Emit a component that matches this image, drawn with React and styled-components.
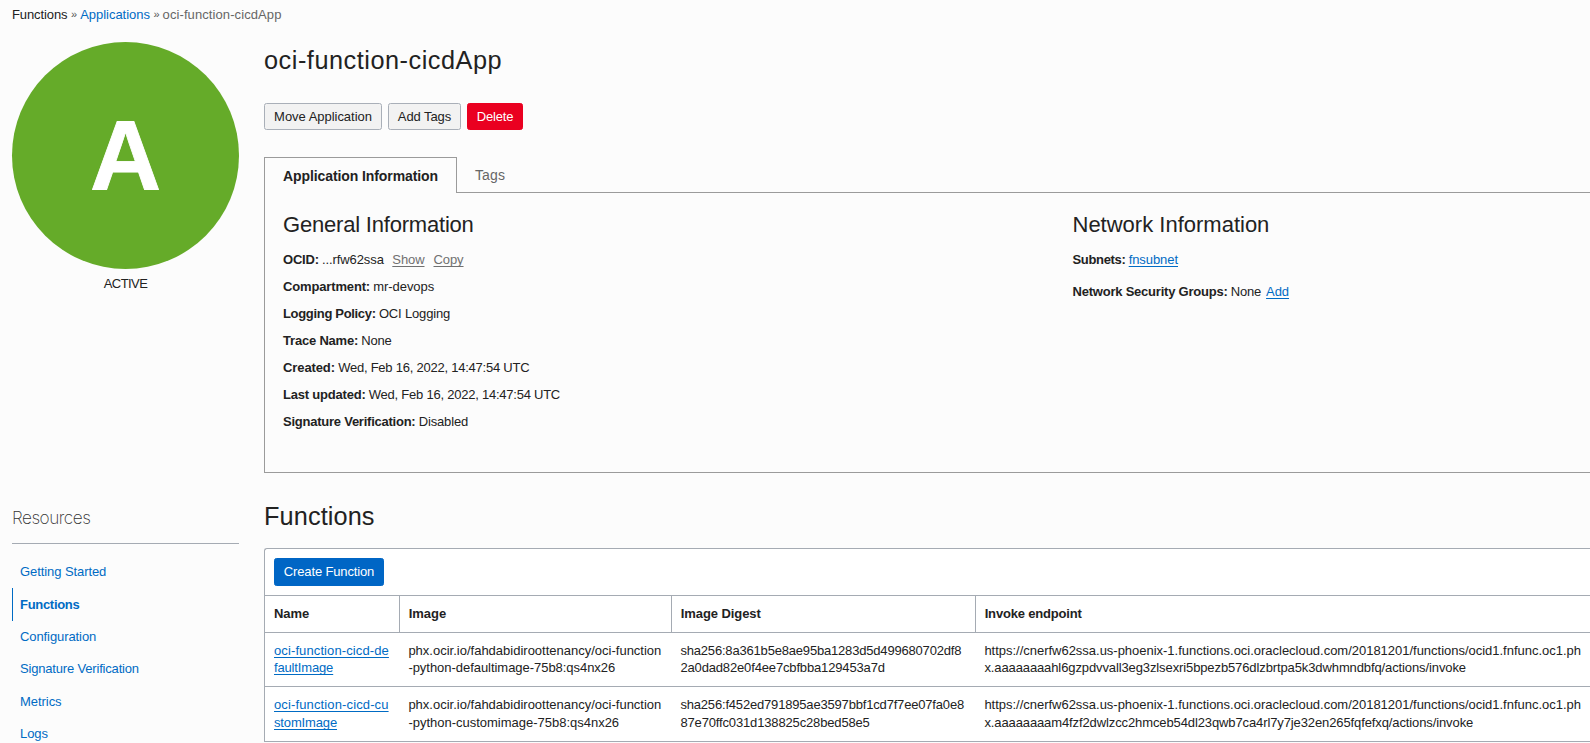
import React from "react";
import styled, { createGlobalStyle, css } from "styled-components";

const INK = "#222222";
const LINK = "#006bc4";
const RULE = "#a5abb3";
const PANEL_RULE = "#9b9b9b";

const GlobalStyle = createGlobalStyle`
  * { box-sizing: border-box; }
  body {
    margin: 0;
    height: 743px;
    overflow: hidden;
    background: #fcfcfc;
    color: ${INK};
    font-family: "Liberation Sans", Arial, sans-serif;
    font-size: 13px;
    line-height: 17px;
  }
`;

const tracking = css`
  letter-spacing: ${(p) => p.$ls || 0}px;
  white-space: nowrap;
`;

const Page = styled.div`
  width: 1590px;
  height: 743px;
  overflow: hidden;
`;

const Breadcrumb = styled.nav`
  height: 42px;
  padding: 6px 12px 0;
  display: flex;
  gap: 3.6px;
`;

const Crumb = styled.span`
  ${tracking}
  color: ${(p) => p.$color || INK};
`;

const Separator = styled.span`
  width: 5.5px;
  font-size: 11px;
  color: #555;
`;

const Columns = styled.div`
  display: grid;
  grid-template-columns: 227px 1fr;
  column-gap: 25px;
  padding-left: 12px;
`;

const Sidebar = styled.aside`
  display: flex;
  flex-direction: column;
`;

const Badge = styled.div`
  width: 227px;
  height: 227px;
  border-radius: 50%;
  background: #65ab29;
  color: #fff;
  display: flex;
  justify-content: center;
  font-size: 98.5px;
  font-weight: 700;
  line-height: 226px;
`;

const BadgeLetter = styled.span`
  -webkit-text-stroke: 0.8px #fff;
`;

const Status = styled.div`
  ${tracking}
  margin-top: 6px;
  text-align: center;
`;

const ResourcesTitle = styled.h3`
  margin: 215px 0 0;
  height: 37px;
  border-bottom: 1px solid ${RULE};
  font-family: Inter, "Liberation Sans", sans-serif;
  font-size: 17.2px;
  font-weight: 200;
  line-height: 22px;
  color: #333;
  ${tracking}
`;

const ResourceList = styled.ul`
  list-style: none;
  margin: 12px 0 0;
  padding: 0;
`;

const ResourceItem = styled.li`
  height: 32.4px;
  line-height: ${(p) => (p.$active ? 34 : 31.4)}px;
  padding-left: 7px;
  border-left: 1px solid ${(p) => (p.$active ? LINK : "transparent")};
  font-weight: ${(p) => (p.$active ? 700 : 400)};
  color: ${LINK};
  ${tracking}
`;

const Main = styled.main`
  min-width: 0;
  display: flex;
  flex-direction: column;
`;

const Title = styled.h1`
  margin: 0;
  height: 61px;
  font-size: 25.3px;
  font-weight: 400;
  line-height: 36px;
  ${tracking}
`;

const ButtonRow = styled.div`
  display: flex;
  gap: 6px;
`;

const variants = {
  plain: css`background: #f2f2f2; border: 1px solid #a9afb8; color: ${INK};`,
  danger: css`background: #ea0020; border: 1px solid #ea0020; color: #fff;`,
  primary: css`background: #0066c5; border: 1px solid #0066c5; color: #fff; padding-bottom: 2px;`,
};

const Button = styled.button`
  padding: 0;
  width: ${(p) => p.$w}px;
  height: ${(p) => p.$h || 27}px;
  border-radius: 2.5px;
  font: inherit;
  text-align: center;
  ${(p) => variants[p.$variant || "plain"]}
  ${tracking}
`;

const Tabs = styled.div`
  margin-top: 27px;
  height: 36px;
  display: flex;
`;

const Tab = styled.div`
  font-size: 14px;
  padding: 10px 0 0 18px;
  ${(p) =>
    p.$active
      ? css`
          width: 193px;
          border: 1px solid ${PANEL_RULE};
          border-bottom: 0;
          font-weight: 700;
        `
      : css`
          flex: 1;
          border-bottom: 1px solid ${PANEL_RULE};
          color: #666;
        `}
  ${tracking}
`;

const InfoPanel = styled.section`
  height: 280px;
  border: 1px solid ${PANEL_RULE};
  border-top: 0;
  border-right: 0;
  padding: 18px 0 0 18px;
  display: grid;
  grid-template-columns: 789.5px 1fr;
`;

const PanelHeading = styled.h2`
  margin: 0 0 12px;
  font-size: 22px;
  font-weight: 400;
  line-height: 28px;
  ${tracking}
`;

const Field = styled.div`
  height: 17px;
  margin-bottom: ${(p) => p.$mb || 10}px;
  display: flex;
`;

const Label = styled.b`
  ${tracking}
  margin-right: 3.2px;
`;

const Value = styled.span`
  ${tracking}
`;

const TextLink = styled.a`
  ${tracking}
  color: ${(p) => (p.$muted ? "#707070" : LINK)};
  margin-left: ${(p) => p.$ml || 0}px;
  text-decoration: underline;
  text-underline-offset: 2px;
  text-decoration-thickness: 1px;
  text-decoration-skip-ink: none;
`;

const SectionTitle = styled.h2`
  margin: 25px 0 0;
  height: 50px;
  font-size: 25.3px;
  font-weight: 400;
  line-height: 36px;
  ${tracking}
`;

const TableCard = styled.section`
  border: 1px solid ${RULE};
  border-right: 0;
  border-bottom: 0;
  border-top-left-radius: 3px;
  background: #fff;
`;

const TableToolbar = styled.div`
  height: 47px;
  padding: 9px 0 0 9px;
  border-bottom: 1px solid ${RULE};
`;

const Row = styled.div`
  display: grid;
  grid-template-columns: 134px 272px 304px 1fr;
  height: ${(p) => p.$h}px;
  line-height: ${(p) => p.$lh || 17}px;
  border-bottom: 1px solid ${RULE};
`;

const HeadCell = styled.div`
  padding: 9px 0 0 9px;
  font-weight: 700;
  ${tracking}
  & + & {
    border-left: 1px solid ${RULE};
    padding-left: 8.7px;
  }
`;

const Cell = styled.div`
  padding: 9px 0 0 9px;
  display: flex;
  flex-direction: column;
  align-items: flex-start;
  & + & { padding-left: 9.4px; }
`;

const general = [
  ["Compartment:", -0.15, "mr-devops", -0.06],
  ["Logging Policy:", -0.32, "OCI Logging", -0.16],
  ["Trace Name:", -0.2, "None", -0.2],
  ["Created:", -0.1, "Wed, Feb 16, 2022, 14:47:54 UTC", -0.235],
  ["Last updated:", -0.2, "Wed, Feb 16, 2022, 14:47:54 UTC", -0.235],
  ["Signature Verification:", -0.24, "Disabled", -0.14],
];

const resources = [
  ["Getting Started", -0.08],
  ["Functions", -0.3],
  ["Configuration", -0.09],
  ["Signature Verification", -0.18],
  ["Metrics", -0.05],
  ["Logs", -0.05],
];

const rows = [
  {
    h: 54,
    lh: 17,
    name: [["oci-function-cicd-de", 0.11], ["faultImage", -0.15]],
    cells: [
      [["phx.ocir.io/fahdabidiroottenancy/oci-function", 0], ["-python-defaultimage-75b8:qs4nx26", -0.04]],
      [["sha256:8a361b5e8ae95ba1283d5d499680702df8", -0.185], ["2a0dad82e0f4ee7cbfbba129453a7d", -0.15]],
      [
        ["https://cnerfw62ssa.us-phoenix-1.functions.oci.oraclecloud.com/20181201/functions/ocid1.fnfunc.oc1.ph", -0.018],
        ["x.aaaaaaaahl6gzpdvvall3eg3zlsexri5bpezb576dlzbrtpa5k3dwhmndbfq/actions/invoke", -0.11],
      ],
    ],
  },
  {
    h: 55,
    lh: 18,
    name: [["oci-function-cicd-cu", 0.13], ["stomImage", -0.14]],
    cells: [
      [["phx.ocir.io/fahdabidiroottenancy/oci-function", 0], ["-python-customimage-75b8:qs4nx26", -0.01]],
      [["sha256:f452ed791895ae3597bbf1cd7f7ee07fa0e8", -0.18], ["87e70ffc031d138825c28bed58e5", -0.15]],
      [
        ["https://cnerfw62ssa.us-phoenix-1.functions.oci.oraclecloud.com/20181201/functions/ocid1.fnfunc.oc1.ph", -0.018],
        ["x.aaaaaaaam4fzf2dwlzcc2hmceb54dl23qwb7ca4rl7y7je32en265fqfefxq/actions/invoke", -0.11],
      ],
    ],
  },
];

export default function App() {
  return (
    <Page>
      <GlobalStyle />
      <Breadcrumb>
        <Crumb $ls={-0.1}>Functions</Crumb>
        <Separator>»</Separator>
        <Crumb $color={LINK} $ls={-0.03}>Applications</Crumb>
        <Separator>»</Separator>
        <Crumb $color="#666" $ls={0.09}>oci-function-cicdApp</Crumb>
      </Breadcrumb>
      <Columns>
        <Sidebar>
          <Badge><BadgeLetter>A</BadgeLetter></Badge>
          <Status $ls={-0.55}>ACTIVE</Status>
          <ResourcesTitle $ls={-0.5}>Resources</ResourcesTitle>
          <ResourceList>
            {resources.map(([name, ls]) => (
              <ResourceItem key={name} $ls={ls} $active={name === "Functions"}>{name}</ResourceItem>
            ))}
          </ResourceList>
        </Sidebar>
        <Main>
          <Title $ls={0.52}>oci-function-cicdApp</Title>
          <ButtonRow>
            <Button $w={118} $ls={-0.03}>Move Application</Button>
            <Button $w={73} $ls={-0.07}>Add Tags</Button>
            <Button $w={56} $variant="danger" $ls={-0.15}>Delete</Button>
          </ButtonRow>
          <Tabs>
            <Tab $active $ls={-0.09}>Application Information</Tab>
            <Tab $ls={0.12}>Tags</Tab>
          </Tabs>
          <InfoPanel>
            <div>
              <PanelHeading $ls={-0.2}>General Information</PanelHeading>
              <Field>
                <Label $ls={-0.2}>OCID:</Label>
                <Value $ls={-0.1}>...rfw62ssa</Value>
                <TextLink $muted $ml={8.5} $ls={-0.08}>Show</TextLink>
                <TextLink $muted $ml={9} $ls={-0.08}>Copy</TextLink>
              </Field>
              {general.map(([label, l1, value, l2]) => (
                <Field key={label}>
                  <Label $ls={l1}>{label}</Label>
                  <Value $ls={l2}>{value}</Value>
                </Field>
              ))}
            </div>
            <div>
              <PanelHeading $ls={0}>Network Information</PanelHeading>
              <Field $mb={15}>
                <Label $ls={-0.33}>Subnets:</Label>
                <TextLink $ls={-0.07}>fnsubnet</TextLink>
              </Field>
              <Field>
                <Label $ls={-0.22}>Network Security Groups:</Label>
                <Value $ls={-0.2}>None</Value>
                <TextLink $ml={5} $ls={-0.05}>Add</TextLink>
              </Field>
            </div>
          </InfoPanel>
          <SectionTitle $ls={0.1}>Functions</SectionTitle>
          <TableCard>
            <TableToolbar>
              <Button $variant="primary" $w={110} $h={28} $ls={-0.14}>Create Function</Button>
            </TableToolbar>
            <Row $h={37}>
              <HeadCell $ls={-0.05}>Name</HeadCell>
              <HeadCell $ls={0}>Image</HeadCell>
              <HeadCell $ls={-0.07}>Image Digest</HeadCell>
              <HeadCell $ls={-0.18}>Invoke endpoint</HeadCell>
            </Row>
            {rows.map((row) => (
              <Row key={row.name[0][0]} $h={row.h} $lh={row.lh}>
                <Cell>
                  {row.name.map(([t, ls]) => <TextLink key={t} $ls={ls}>{t}</TextLink>)}
                </Cell>
                {row.cells.map((lines) => (
                  <Cell key={lines[0][0]}>
                    {lines.map(([t, ls]) => <Value key={t} $ls={ls}>{t}</Value>)}
                  </Cell>
                ))}
              </Row>
            ))}
          </TableCard>
        </Main>
      </Columns>
    </Page>
  );
}
